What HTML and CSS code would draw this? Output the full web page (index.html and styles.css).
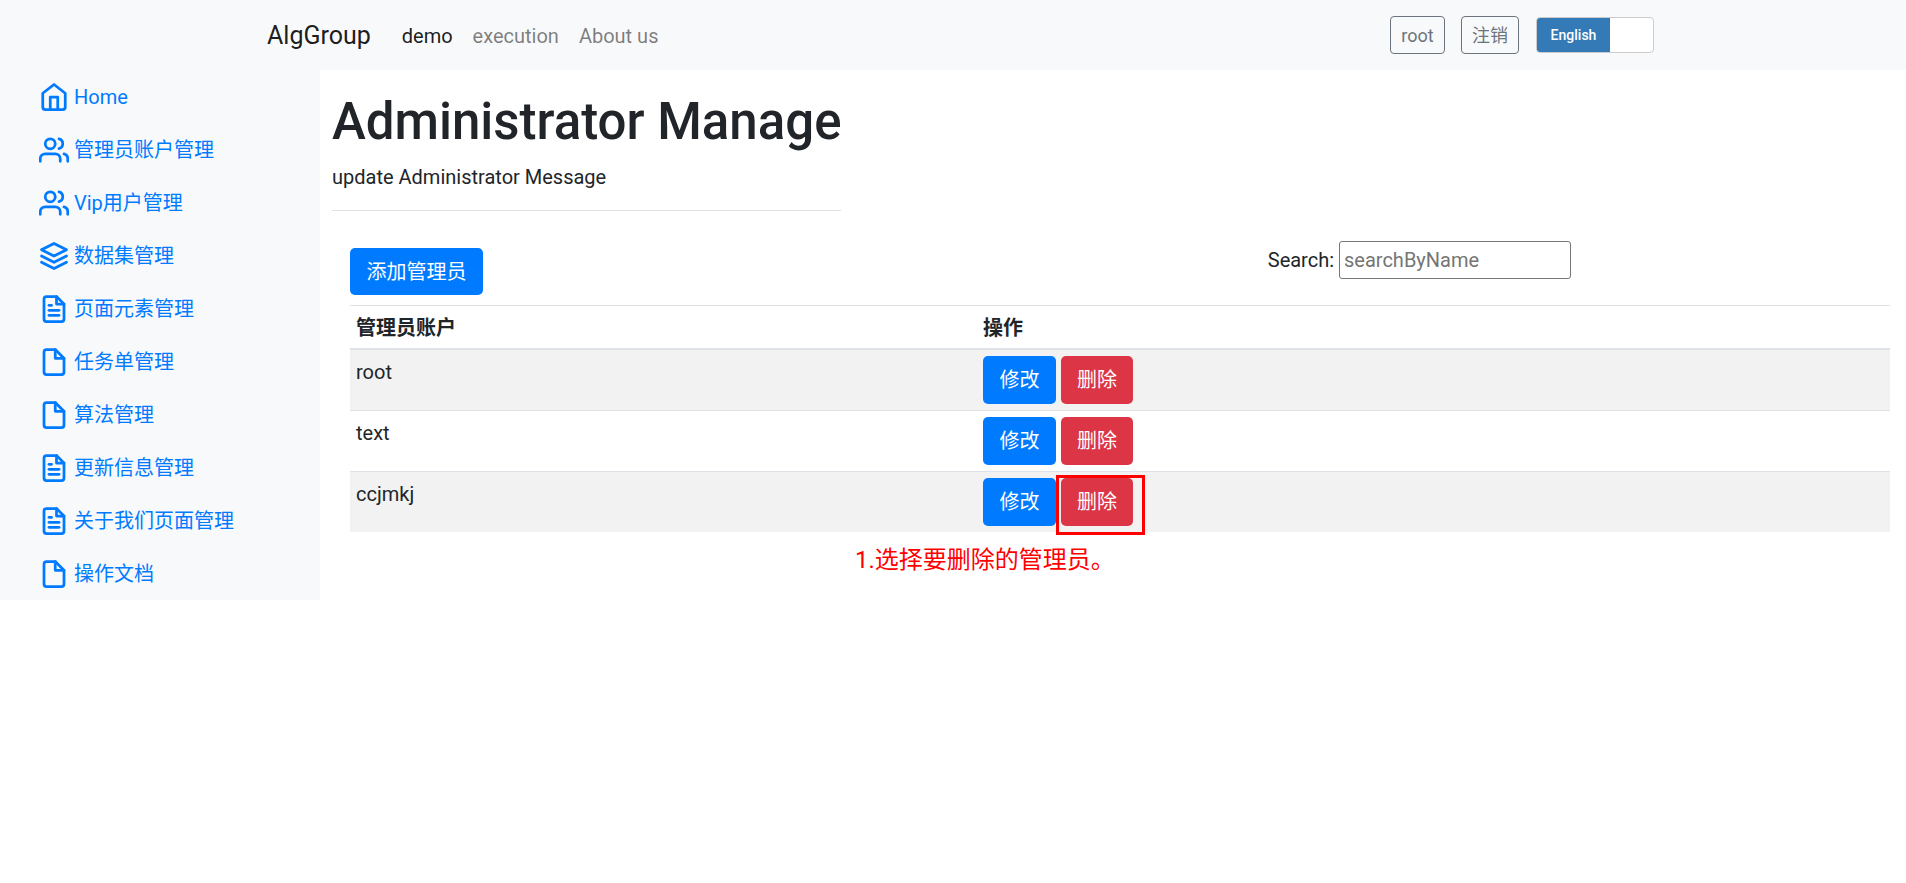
FILE: index.html
```html
<!DOCTYPE html>
<html lang="en">
<head>
    <meta charset="UTF-8">
    <meta name="viewport" content="width=device-width, initial-scale=1.0">
    <title>Administrator Manage</title>
    <link rel="stylesheet" href="styles.css">
</head>
<body>
    <header class="navbar">
        <a class="brand" href="#">AlgGroup</a>
        <nav class="nav-links">
            <a class="nav-link active" href="#">demo</a>
            <a class="nav-link" href="#">execution</a>
            <a class="nav-link" href="#">About us</a>
        </nav>
        <div class="nav-right">
            <button class="btn-outline btn-user">root</button>
            <button class="btn-outline btn-logout">注销</button>
            <div class="lang-switch">
                <span class="lang-on">English</span>
                <span class="lang-off"></span>
            </div>
        </div>
    </header>

    <div class="layout">
        <aside class="sidebar">
            <a class="side-item" href="#">
                <svg class="side-icon" viewBox="0 0 24 24"><path d="M3 9l9-7 9 7v11a2 2 0 0 1-2 2H5a2 2 0 0 1-2-2z"/><polyline points="9 22 9 12 15 12 15 22"/></svg>
                Home
            </a>
            <a class="side-item" href="#">
                <svg class="side-icon" viewBox="0 0 24 24"><path d="M17 21v-2a4 4 0 0 0-4-4H5a4 4 0 0 0-4 4v2"/><circle cx="9" cy="7" r="4"/><path d="M23 21v-2a4 4 0 0 0-3-3.87"/><path d="M16 3.13a4 4 0 0 1 0 7.75"/></svg>
                管理员账户管理
            </a>
            <a class="side-item" href="#">
                <svg class="side-icon" viewBox="0 0 24 24"><path d="M17 21v-2a4 4 0 0 0-4-4H5a4 4 0 0 0-4 4v2"/><circle cx="9" cy="7" r="4"/><path d="M23 21v-2a4 4 0 0 0-3-3.87"/><path d="M16 3.13a4 4 0 0 1 0 7.75"/></svg>
                Vip用户管理
            </a>
            <a class="side-item" href="#">
                <svg class="side-icon" viewBox="0 0 24 24"><polygon points="12 2 2 7 12 12 22 7 12 2"/><polyline points="2 17 12 22 22 17"/><polyline points="2 12 12 17 22 12"/></svg>
                数据集管理
            </a>
            <a class="side-item" href="#">
                <svg class="side-icon" viewBox="0 0 24 24"><path d="M14 2H6a2 2 0 0 0-2 2v16a2 2 0 0 0 2 2h12a2 2 0 0 0 2-2V8z"/><polyline points="14 2 14 8 20 8"/><line x1="16" y1="13" x2="8" y2="13"/><line x1="16" y1="17" x2="8" y2="17"/><polyline points="10 9 9 9 8 9"/></svg>
                页面元素管理
            </a>
            <a class="side-item" href="#">
                <svg class="side-icon" viewBox="0 0 24 24"><path d="M13 2H6a2 2 0 0 0-2 2v16a2 2 0 0 0 2 2h12a2 2 0 0 0 2-2V9z"/><polyline points="13 2 13 9 20 9"/></svg>
                任务单管理
            </a>
            <a class="side-item" href="#">
                <svg class="side-icon" viewBox="0 0 24 24"><path d="M13 2H6a2 2 0 0 0-2 2v16a2 2 0 0 0 2 2h12a2 2 0 0 0 2-2V9z"/><polyline points="13 2 13 9 20 9"/></svg>
                算法管理
            </a>
            <a class="side-item" href="#">
                <svg class="side-icon" viewBox="0 0 24 24"><path d="M14 2H6a2 2 0 0 0-2 2v16a2 2 0 0 0 2 2h12a2 2 0 0 0 2-2V8z"/><polyline points="14 2 14 8 20 8"/><line x1="16" y1="13" x2="8" y2="13"/><line x1="16" y1="17" x2="8" y2="17"/><polyline points="10 9 9 9 8 9"/></svg>
                更新信息管理
            </a>
            <a class="side-item" href="#">
                <svg class="side-icon" viewBox="0 0 24 24"><path d="M14 2H6a2 2 0 0 0-2 2v16a2 2 0 0 0 2 2h12a2 2 0 0 0 2-2V8z"/><polyline points="14 2 14 8 20 8"/><line x1="16" y1="13" x2="8" y2="13"/><line x1="16" y1="17" x2="8" y2="17"/><polyline points="10 9 9 9 8 9"/></svg>
                关于我们页面管理
            </a>
            <a class="side-item" href="#">
                <svg class="side-icon" viewBox="0 0 24 24"><path d="M13 2H6a2 2 0 0 0-2 2v16a2 2 0 0 0 2 2h12a2 2 0 0 0 2-2V9z"/><polyline points="13 2 13 9 20 9"/></svg>
                操作文档
            </a>
        </aside>

        <main class="content">
            <div class="page-head">
                <h1>Administrator Manage</h1>
                <p>update Administrator Message</p>
                <hr>
            </div>

            <div class="panel">
                <div class="toolbar">
                    <button class="btn btn-primary btn-add">添加管理员</button>
                    <label class="search">Search: <input type="text" placeholder="searchByName"></label>
                </div>

                <table class="admin-table">
                    <thead>
                        <tr>
                            <th class="col-name">管理员账户</th>
                            <th>操作</th>
                        </tr>
                    </thead>
                    <tbody>
                        <tr>
                            <td class="cell-name">root</td>
                            <td>
                                <button class="btn btn-primary">修改</button>
                                <button class="btn btn-danger">删除</button>
                            </td>
                        </tr>
                        <tr>
                            <td class="cell-name">text</td>
                            <td>
                                <button class="btn btn-primary">修改</button>
                                <button class="btn btn-danger">删除</button>
                            </td>
                        </tr>
                        <tr>
                            <td class="cell-name">ccjmkj</td>
                            <td>
                                <button class="btn btn-primary">修改</button>
                                <button class="btn btn-danger">删除</button>
                            </td>
                        </tr>
                    </tbody>
                </table>

                <!-- annotation drawn on top of the screenshot -->
                <div class="mark-box"></div>
                <div class="mark-text">1.选择要删除的管理员。</div>
            </div>
        </main>
    </div>
</body>
</html>
```

FILE: styles.css
```css
* {
    box-sizing: border-box;
}

body {
    margin: 0;
    font-family: Roboto, "Noto Sans CJK SC", sans-serif;
    font-size: 20px;
    line-height: 1.5;
    color: #212529;
    background: white;
}

a {
    text-decoration: none;
}

.navbar {
    display: flex;
    align-items: center;
    height: 70px;
    padding-left: 267px;
    background: #f8f9fa;
}

.brand {
    font-size: 25px;
    color: rgba(0,0,0,0.9);
    margin-right: 31px;
    padding-top: 2px;
}

.nav-links {
    display: flex;
    gap: 20px;
    padding-top: 2px;
}

.nav-link {
    color: rgba(0,0,0,0.5);
}

.nav-link.active {
    color: rgba(0,0,0,0.9);
}

.nav-right {
    display: flex;
    align-items: center;
    margin-left: auto;
    margin-right: 252px;
}

.btn-outline {
    height: 38px;
    padding: 0;
    font: inherit;
    font-size: 18px;
    color: #6c757d;
    background: transparent;
    border: 1px solid #6c757d;
    border-radius: 4px;
}

.btn-user {
    width: 55px;
    margin-right: 16px;
}

.btn-logout {
    width: 58px;
    margin-right: 17px;
}

.lang-switch {
    display: flex;
    width: 118px;
    height: 36px;
    background: white;
    border: 1px solid #ccc;
    border-radius: 4px;
    overflow: hidden;
}

.lang-on {
    width: 73px;
    font-size: 14px;
    font-weight: 500;
    line-height: 34px;
    text-align: center;
    color: white;
    background: #337ab7;
}

.layout {
    display: flex;
    align-items: flex-start;
}

.sidebar {
    width: 320px;
    flex-shrink: 0;
    background: #f8f9fa;
}

.side-item {
    display: flex;
    align-items: center;
    gap: 5px;
    height: 53px;
    padding-left: 39px;
    color: #007bff;
}

.side-icon {
    width: 30px;
    height: 30px;
    flex-shrink: 0;
    fill: none;
    stroke: currentColor;
    stroke-width: 2.2;
    stroke-linecap: round;
    stroke-linejoin: round;
}

.content {
    flex: 1;
    padding: 21px 16px 0 12px;
}

.page-head {
    display: inline-block;
}

.page-head h1 {
    margin: 0;
    font-size: 51px;
    font-weight: 500;
    line-height: 1.2;
}

.page-head p {
    margin: 10px 0 0;
}

.page-head hr {
    margin: 18px 0 0;
    border: none;
    border-top: 1px solid #dee2e6;
}

.panel {
    position: relative;
    margin-left: 18px;
    margin-top: 15px;
}

.toolbar {
    display: flex;
    justify-content: space-between;
    align-items: flex-start;
    height: 71px;
    padding-top: 14px;
    padding-right: 319px;
}

.search input {
    width: 232px;
    height: 38px;
    padding: 1px 4px;
    font: inherit;
    border: 1px solid #767676;
    border-radius: 3px;
}

.search input::placeholder {
    color: #757575;
}

.search {
    margin-top: -7px;
}

.btn {
    height: 48px;
    padding: 0 15.5px;
    font: inherit;
    color: white;
    border: 1px solid transparent;
    border-radius: 5px;
}

.btn-primary {
    background: #007bff;
}

.btn-danger {
    padding: 0 15px;
    background: #dc3545;
}

.btn-add {
    height: 47px;
}

.admin-table {
    width: 100%;
    border-collapse: collapse;
}

.admin-table th,
.admin-table td {
    padding: 6px;
    text-align: left;
    vertical-align: top;
    border-top: 1px solid #dee2e6;
}

.admin-table th,
.admin-table .cell-name {
    padding: 7px 6px 5px;
}

.admin-table th {
    font-weight: 700;
    border-bottom: 2px solid #dee2e6;
}

.col-name {
    width: 627px;
}

.admin-table tbody tr:nth-child(odd) {
    background: #f2f2f2;
}

.mark-box {
    position: absolute;
    left: 706px;
    top: 241px;
    width: 89px;
    height: 60px;
    border: 3px solid red;
}

.mark-text {
    position: absolute;
    left: 505px;
    top: 308px;
    font-size: 24px;
    color: red;
}
```
